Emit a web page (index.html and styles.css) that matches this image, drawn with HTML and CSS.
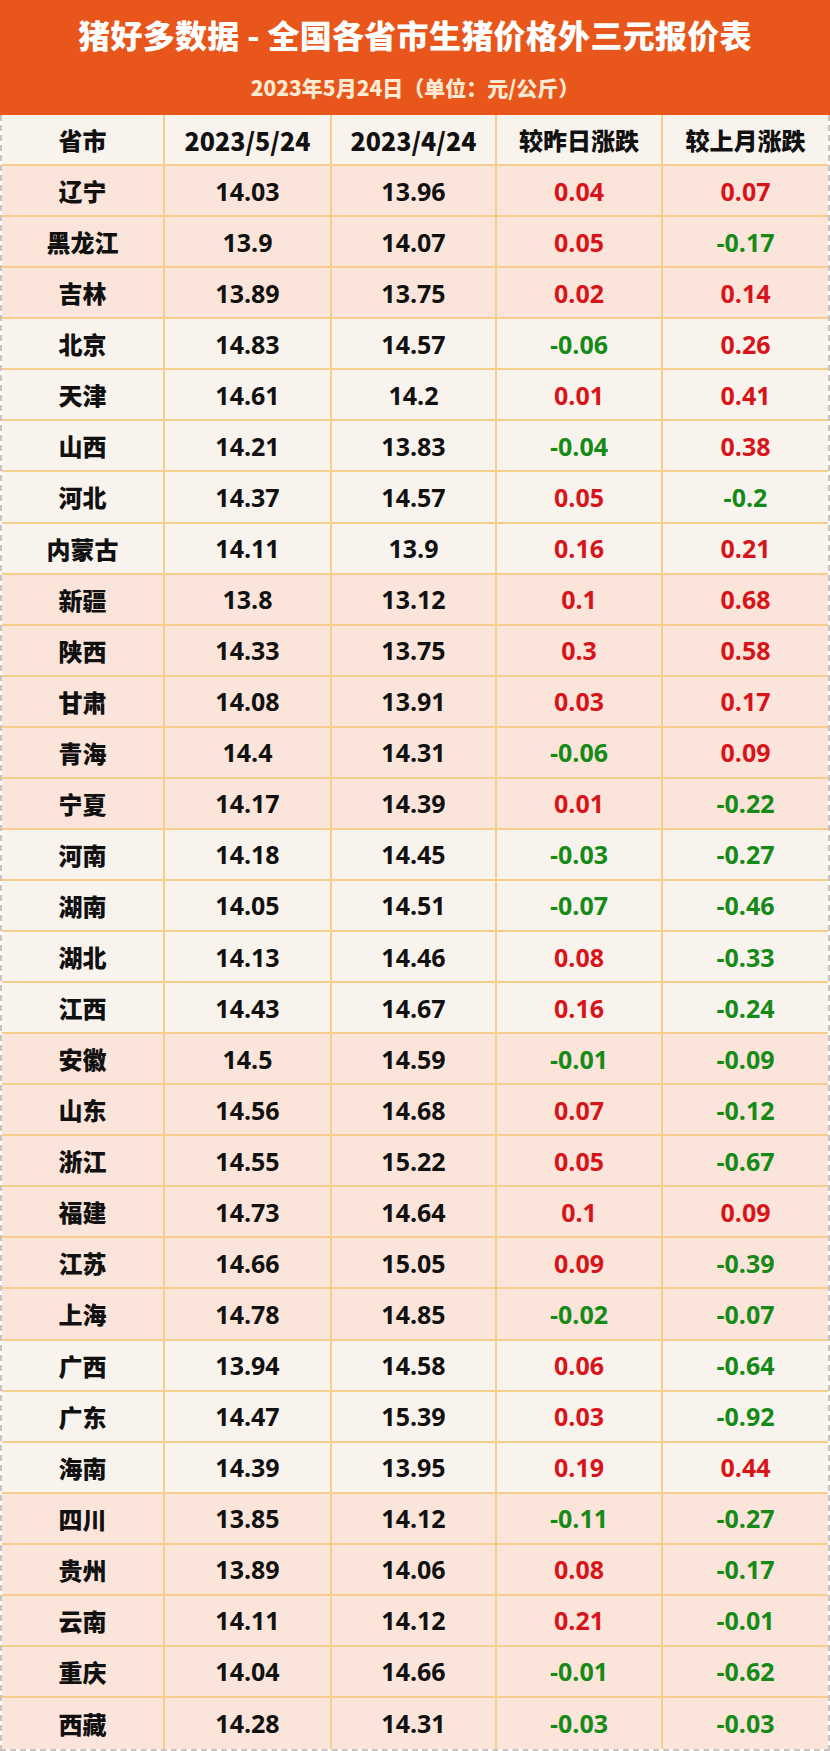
FILE: index.html
```html
<!DOCTYPE html>
<html lang="zh-CN">
<head>
<meta charset="utf-8">
<title>猪好多数据 - 全国各省市生猪价格外三元报价表</title>
<link rel="stylesheet" href="styles.css">
</head>
<body>
<div class="page">
  <header class="banner">
    <h1 class="title">猪好多数据 - 全国各省市生猪价格外三元报价表</h1>
    <p class="subtitle">2023年5月24日（单位：元/公斤）</p>
  </header>
  <div class="table">
    <div class="row light head"><div>省市</div><div>2023/5/24</div><div>2023/4/24</div><div>较昨日涨跌</div><div>较上月涨跌</div></div>
    <div class="row pink"><div>辽宁</div><div>14.03</div><div>13.96</div><div class="up">0.04</div><div class="up">0.07</div></div>
    <div class="row pink"><div>黑龙江</div><div>13.9</div><div>14.07</div><div class="up">0.05</div><div class="down">-0.17</div></div>
    <div class="row pink"><div>吉林</div><div>13.89</div><div>13.75</div><div class="up">0.02</div><div class="up">0.14</div></div>
    <div class="row light"><div>北京</div><div>14.83</div><div>14.57</div><div class="down">-0.06</div><div class="up">0.26</div></div>
    <div class="row light"><div>天津</div><div>14.61</div><div>14.2</div><div class="up">0.01</div><div class="up">0.41</div></div>
    <div class="row light"><div>山西</div><div>14.21</div><div>13.83</div><div class="down">-0.04</div><div class="up">0.38</div></div>
    <div class="row light"><div>河北</div><div>14.37</div><div>14.57</div><div class="up">0.05</div><div class="down">-0.2</div></div>
    <div class="row light"><div>内蒙古</div><div>14.11</div><div>13.9</div><div class="up">0.16</div><div class="up">0.21</div></div>
    <div class="row pink"><div>新疆</div><div>13.8</div><div>13.12</div><div class="up">0.1</div><div class="up">0.68</div></div>
    <div class="row pink"><div>陕西</div><div>14.33</div><div>13.75</div><div class="up">0.3</div><div class="up">0.58</div></div>
    <div class="row pink"><div>甘肃</div><div>14.08</div><div>13.91</div><div class="up">0.03</div><div class="up">0.17</div></div>
    <div class="row pink"><div>青海</div><div>14.4</div><div>14.31</div><div class="down">-0.06</div><div class="up">0.09</div></div>
    <div class="row pink"><div>宁夏</div><div>14.17</div><div>14.39</div><div class="up">0.01</div><div class="down">-0.22</div></div>
    <div class="row light"><div>河南</div><div>14.18</div><div>14.45</div><div class="down">-0.03</div><div class="down">-0.27</div></div>
    <div class="row light"><div>湖南</div><div>14.05</div><div>14.51</div><div class="down">-0.07</div><div class="down">-0.46</div></div>
    <div class="row light"><div>湖北</div><div>14.13</div><div>14.46</div><div class="up">0.08</div><div class="down">-0.33</div></div>
    <div class="row light"><div>江西</div><div>14.43</div><div>14.67</div><div class="up">0.16</div><div class="down">-0.24</div></div>
    <div class="row pink"><div>安徽</div><div>14.5</div><div>14.59</div><div class="down">-0.01</div><div class="down">-0.09</div></div>
    <div class="row pink"><div>山东</div><div>14.56</div><div>14.68</div><div class="up">0.07</div><div class="down">-0.12</div></div>
    <div class="row pink"><div>浙江</div><div>14.55</div><div>15.22</div><div class="up">0.05</div><div class="down">-0.67</div></div>
    <div class="row pink"><div>福建</div><div>14.73</div><div>14.64</div><div class="up">0.1</div><div class="up">0.09</div></div>
    <div class="row pink"><div>江苏</div><div>14.66</div><div>15.05</div><div class="up">0.09</div><div class="down">-0.39</div></div>
    <div class="row pink"><div>上海</div><div>14.78</div><div>14.85</div><div class="down">-0.02</div><div class="down">-0.07</div></div>
    <div class="row light"><div>广西</div><div>13.94</div><div>14.58</div><div class="up">0.06</div><div class="down">-0.64</div></div>
    <div class="row light"><div>广东</div><div>14.47</div><div>15.39</div><div class="up">0.03</div><div class="down">-0.92</div></div>
    <div class="row light"><div>海南</div><div>14.39</div><div>13.95</div><div class="up">0.19</div><div class="up">0.44</div></div>
    <div class="row pink"><div>四川</div><div>13.85</div><div>14.12</div><div class="down">-0.11</div><div class="down">-0.27</div></div>
    <div class="row pink"><div>贵州</div><div>13.89</div><div>14.06</div><div class="up">0.08</div><div class="down">-0.17</div></div>
    <div class="row pink"><div>云南</div><div>14.11</div><div>14.12</div><div class="up">0.21</div><div class="down">-0.01</div></div>
    <div class="row pink"><div>重庆</div><div>14.04</div><div>14.66</div><div class="down">-0.01</div><div class="down">-0.62</div></div>
    <div class="row pink"><div>西藏</div><div>14.28</div><div>14.31</div><div class="down">-0.03</div><div class="down">-0.03</div></div>
  </div>
</div>
</body>
</html>
```

FILE: styles.css
```css
* {
  box-sizing: border-box;
}

html, body {
  margin: 0;
  padding: 0;
  background: #ffffff;
}

.page {
  width: 830px;
  height: 1751px;
  display: flex;
  flex-direction: column;
  font-family: "Open Sans", "Noto Sans CJK SC", sans-serif;
  font-weight: 700;
}

.banner {
  height: 115px;
  flex: none;
  background: #e8561b;
  display: flex;
  flex-direction: column;
  align-items: center;
  padding-top: 13px;
}

.title {
  margin: 0;
  color: #ffffff;
  font-family: "Noto Sans CJK SC", sans-serif;
  font-size: 32px;
  font-weight: 800;
  line-height: 42px;
  letter-spacing: 0.3px;
}

.subtitle {
  margin: 18px 0 0;
  color: #fcead2;
  font-family: "Noto Sans CJK SC", sans-serif;
  font-size: 21px;
  font-weight: 800;
  line-height: 28px;
}

.table {
  flex: 1;
  display: grid;
  grid-template-rows: repeat(32, 1fr);
  border-left: 2px dashed #c9c2be;
  border-right: 2px dashed #c9c2be;
  border-bottom: 2px dashed #c9c2be;
}

.row {
  display: grid;
  grid-template-columns: 163px 167px 165px 166px 1fr;
  border-bottom: 2px solid #f5cd8c;
}

.row:last-child {
  border-bottom: none;
}

.row > div {
  display: flex;
  align-items: center;
  justify-content: center;
  border-right: 2px solid #f5cd8c;
  font-size: 25px;
  color: #111111;
}

.row > div:last-child {
  border-right: none;
}

.row > div:first-child {
  font-family: "Noto Sans CJK SC", sans-serif;
  font-size: 24px;
  font-weight: 800;
}

.head > div {
  font-family: "Noto Sans CJK SC", sans-serif;
  font-weight: 800;
}

.head > div:nth-child(4),
.head > div:nth-child(5) {
  font-size: 24px;
}

.pink {
  background: #fbe4d9;
}

.light {
  background: #f9f3ee;
}

.row > .up {
  color: #d8141b;
}

.row > .down {
  color: #158a17;
}
```
